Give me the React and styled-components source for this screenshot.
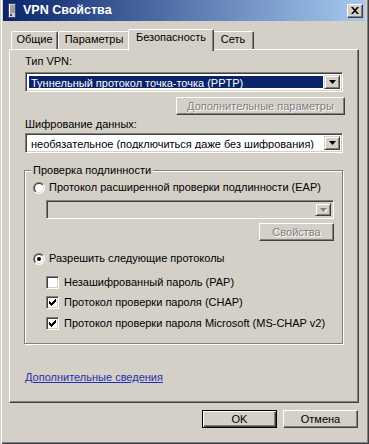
import { useId } from "react";
import styled, { createGlobalStyle, css } from "styled-components";

const GlobalStyle = createGlobalStyle`
  html, body {
    margin: 0;
    padding: 0;
    background: #d4d0c8;
  }
  body {
    font-family: "Liberation Sans", Arial, sans-serif;
    font-size: 11px;
    line-height: 13px;
    color: #000000;
  }
`;

const raised = css`
  border: 1px solid;
  border-color: #ffffff #404040 #404040 #ffffff;
  box-shadow: inset -1px -1px 0 #808080;
`;

const sunken = css`
  border: 1px solid;
  border-color: #808080 #ffffff #ffffff #808080;
  box-shadow: inset 1px 1px 0 #404040, inset -1px -1px 0 #d4d0c8;
`;

const disabledText = css`
  color: #808080;
  text-shadow: 1px 1px 0 #ffffff;
`;

const TABS = [
  { title: "Общие", width: 47 },
  { title: "Параметры", width: 72 },
  { title: "Безопасность", width: 86, active: true },
  { title: "Сеть", width: 42 },
];

export default function App() {
  return (
    <>
      <GlobalStyle />
      <Window>
        <TitleBar>
          <TitleIcon />
          <Title>VPN Свойства</Title>
          <CloseButton>
            <svg width="8" height="7" viewBox="0 0 8 7">
              <path d="M0 0h2l2 2.2L6 0h2L5 3.5 8 7H6L4 4.8 2 7H0l3-3.5z" fill="#000" />
            </svg>
          </CloseButton>
        </TitleBar>

        <Body>
          <TabStrip>
            {TABS.map((t) => (
              <Tab key={t.title} $width={t.width} $active={t.active}>
                {t.title}
              </Tab>
            ))}
          </TabStrip>

          <Panel>
            <Label $top={5}>Тип VPN:</Label>
            <Combo $top={4} $selected text="Туннельный протокол точка-точка (PPTP)" />
            <Button $top={5} $width={169} $right={-2} disabled>
              Дополнительные параметры
            </Button>

            <Label $top={3}>Шифрование данных:</Label>
            <Combo $top={2} text="необязательное (подключиться даже без шифрования)" />

            <GroupBox>
              <GroupTitle>Проверка подлинности</GroupTitle>
              <Row>
                <Radio />
                <RadioLabel>Протокол расширенной проверки подлинности (EAP)</RadioLabel>
              </Row>
              <Combo $top={6} $left={13} $height={19} disabled text="" />
              <Button $top={4} $width={75} disabled>
                Свойства
              </Button>

              <Row $top={11}>
                <Radio checked />
                <RadioLabel>Разрешить следующие протоколы</RadioLabel>
              </Row>
              <Row $top={11} $left={13}>
                <CheckBox />
                <CheckLabel>Незашифрованный пароль (PAP)</CheckLabel>
              </Row>
              <Row $top={7} $left={13}>
                <CheckBox checked />
                <CheckLabel>Протокол проверки пароля (CHAP)</CheckLabel>
              </Row>
              <Row $top={8} $left={13}>
                <CheckBox checked />
                <CheckLabel>Протокол проверки пароля Microsoft (MS-CHAP v2)</CheckLabel>
              </Row>
            </GroupBox>

            <Link href="#">Дополнительные сведения</Link>
          </Panel>

          <ButtonRow>
            <Button $width={75} $default>
              OK
            </Button>
            <Button $width={75}>Отмена</Button>
          </ButtonRow>
        </Body>
      </Window>
    </>
  );
}

function TitleIcon() {
  return (
    <svg width="8" height="15" viewBox="0 0 8 15">
      <rect x="0.5" y="0.5" width="7" height="14" fill="#c8ccd4" stroke="#3c4660" />
      <rect x="1" y="1" width="1" height="13" fill="#ffffff" />
      <path d="M2 3h5M2 5h5M2 7h5M2 9h5" stroke="#6a7288" strokeWidth="1" />
      <rect x="2" y="11" width="2" height="2" fill="#3c4660" />
    </svg>
  );
}

function Combo({ text, $selected, disabled, ...rest }) {
  return (
    <ComboBox $disabled={disabled} {...rest}>
      <ComboText $selected={$selected}>{text}</ComboText>
      <DropButton>
        <svg width="7" height="4" viewBox="0 0 7 4">
          {disabled && <path d="M1 1h7L4.5 5z" fill="#ffffff" />}
          <path d="M0 0h7L3.5 4z" fill={disabled ? "#808080" : "#000"} />
        </svg>
      </DropButton>
    </ComboBox>
  );
}

function Radio({ checked }) {
  const id = useId().replace(/:/g, "");
  return (
    <svg width="12" height="12" viewBox="0 0 12 12">
      <defs>
        <linearGradient id={`o${id}`} x1="0" y1="0" x2="1" y2="1">
          <stop offset="0.5" stopColor="#808080" />
          <stop offset="0.5" stopColor="#ffffff" />
        </linearGradient>
        <linearGradient id={`i${id}`} x1="0" y1="0" x2="1" y2="1">
          <stop offset="0.5" stopColor="#404040" />
          <stop offset="0.5" stopColor="#d4d0c8" />
        </linearGradient>
      </defs>
      <circle cx="6" cy="6" r="6" fill={`url(#o${id})`} />
      <circle cx="6" cy="6" r="5" fill={`url(#i${id})`} />
      <circle cx="6" cy="6" r="4" fill="#ffffff" />
      {checked && <circle cx="6" cy="6" r="2" fill="#000" />}
    </svg>
  );
}

function CheckBox({ checked }) {
  return (
    <Box>
      {checked && (
        <svg width="7" height="7" viewBox="0 0 7 7">
          <path d="M0 2h1v1h1v1h1V3h1V2h1V1h1V0h1v3H6v1H5v1H4v1H3v1H2V6H1V5H0z" fill="#000" />
        </svg>
      )}
    </Box>
  );
}

const Window = styled.div`
  width: 369px;
  height: 444px;
  box-sizing: border-box;
  padding: 0 4px 4px 3px;
  background: #d4d0c8;
  box-shadow: inset 1px 0 0 #d4d0c8, inset 2px 0 0 #ffffff, inset -1px -1px 0 #404040,
    inset -2px -2px 0 #808080;
  display: flex;
  flex-direction: column;
`;

const TitleBar = styled.div`
  height: 21px;
  padding: 0 2px 0 5px;
  display: flex;
  align-items: center;
  background: linear-gradient(to right, #0a246a, #a6caf0);
`;

const Title = styled.span`
  margin-left: 7px;
  color: #ffffff;
  font-weight: bold;
  font-size: 12.5px;
`;

const CloseButton = styled.div`
  width: 16px;
  height: 14px;
  box-sizing: border-box;
  margin-left: auto;
  ${raised};
  background: #d4d0c8;
  display: flex;
  align-items: center;
  justify-content: center;
`;

const Body = styled.div`
  padding: 0 6px;
  display: flex;
  flex-direction: column;
`;

const TabStrip = styled.div`
  height: 28px;
  padding-left: 2px;
  display: flex;
  align-items: flex-end;
  position: relative;
  z-index: 1;
`;

const Tab = styled.div`
  width: ${(p) => p.$width}px;
  height: ${(p) => (p.$active ? 22 : 18)}px;
  margin: 0 ${(p) => (p.$active ? -2 : 0)}px ${(p) => (p.$active ? -2 : 0)}px;
  box-sizing: border-box;
  padding-top: 1px;
  text-align: center;
  background: #d4d0c8;
  border: 1px solid;
  border-bottom: none;
  border-color: #ffffff #404040 transparent #ffffff;
  border-radius: 2px 2px 0 0;
  box-shadow: inset -1px 0 0 #808080;
  position: relative;
  z-index: ${(p) => (p.$active ? 2 : 0)};
`;

const Panel = styled.div`
  height: 354px;
  box-sizing: border-box;
  padding: 0 15px;
  ${raised};
  display: flex;
  flex-direction: column;
`;

const Label = styled.div`
  margin-top: ${(p) => p.$top || 0}px;
`;

const ComboBox = styled.div`
  height: ${(p) => p.$height || 20}px;
  margin-top: ${(p) => p.$top || 0}px;
  margin-left: ${(p) => p.$left || 0}px;
  box-sizing: border-box;
  padding: 2px;
  ${sunken};
  background: ${(p) => (p.$disabled ? "#d4d0c8" : "#ffffff")};
  display: flex;
`;

const ComboText = styled.div`
  flex: 1;
  margin: 1px;
  padding-left: 2px;
  line-height: 14px;
  white-space: nowrap;
  overflow: hidden;
  ${(p) =>
    p.$selected &&
    css`
      background: #0a246a;
      color: #ffffff;
    `}
`;

const DropButton = styled.div`
  width: 16px;
  box-sizing: border-box;
  background: #d4d0c8;
  border: 1px solid;
  border-color: #d4d0c8 #404040 #404040 #d4d0c8;
  box-shadow: inset 1px 1px 0 #ffffff, inset -1px -1px 0 #808080;
  display: flex;
  align-items: center;
  justify-content: center;
`;

const Button = styled.button`
  width: ${(p) => p.$width}px;
  height: 18px;
  margin: ${(p) => p.$top || 0}px ${(p) => p.$right || 0}px 0 0;
  align-self: flex-end;
  box-sizing: border-box;
  padding: 0;
  font-family: inherit;
  font-size: 11px;
  color: #000000;
  background: #d4d0c8;
  ${raised};
  ${(p) =>
    p.$default &&
    css`
      border: 1px solid #000000;
      box-shadow: inset 1px 1px 0 #ffffff, inset -1px -1px 0 #404040, inset -2px -2px 0 #808080;
    `}
  &:disabled {
    ${disabledText};
  }
`;

const GroupBox = styled.div`
  margin: 17px 0 0 -1px;
  width: 319px;
  box-sizing: border-box;
  padding: 10px 8px 13px;
  border: 1px solid #808080;
  box-shadow: inset 1px 1px 0 #ffffff, 1px 1px 0 #ffffff;
  display: flex;
  flex-direction: column;
  position: relative;
`;

const GroupTitle = styled.span`
  position: absolute;
  top: -7px;
  left: 6px;
  padding: 0 2px;
  background: #d4d0c8;
`;

const Row = styled.div`
  height: 13px;
  margin-top: ${(p) => p.$top || 0}px;
  margin-left: ${(p) => p.$left || 0}px;
  display: flex;
  align-items: center;
  white-space: nowrap;
`;

const RadioLabel = styled.span`
  margin-left: 4px;
`;

const CheckLabel = styled.span`
  margin-left: 5px;
`;

const Box = styled.div`
  width: 13px;
  height: 13px;
  box-sizing: border-box;
  ${sunken};
  background: #ffffff;
  display: flex;
  align-items: center;
  justify-content: center;
`;

const Link = styled.a`
  margin-top: 27px;
  align-self: flex-start;
  color: #1f2fb0;
  text-decoration: underline;
`;

const ButtonRow = styled.div`
  margin-top: 7px;
  padding-right: 1px;
  display: flex;
  justify-content: flex-end;
  gap: 6px;
`;
